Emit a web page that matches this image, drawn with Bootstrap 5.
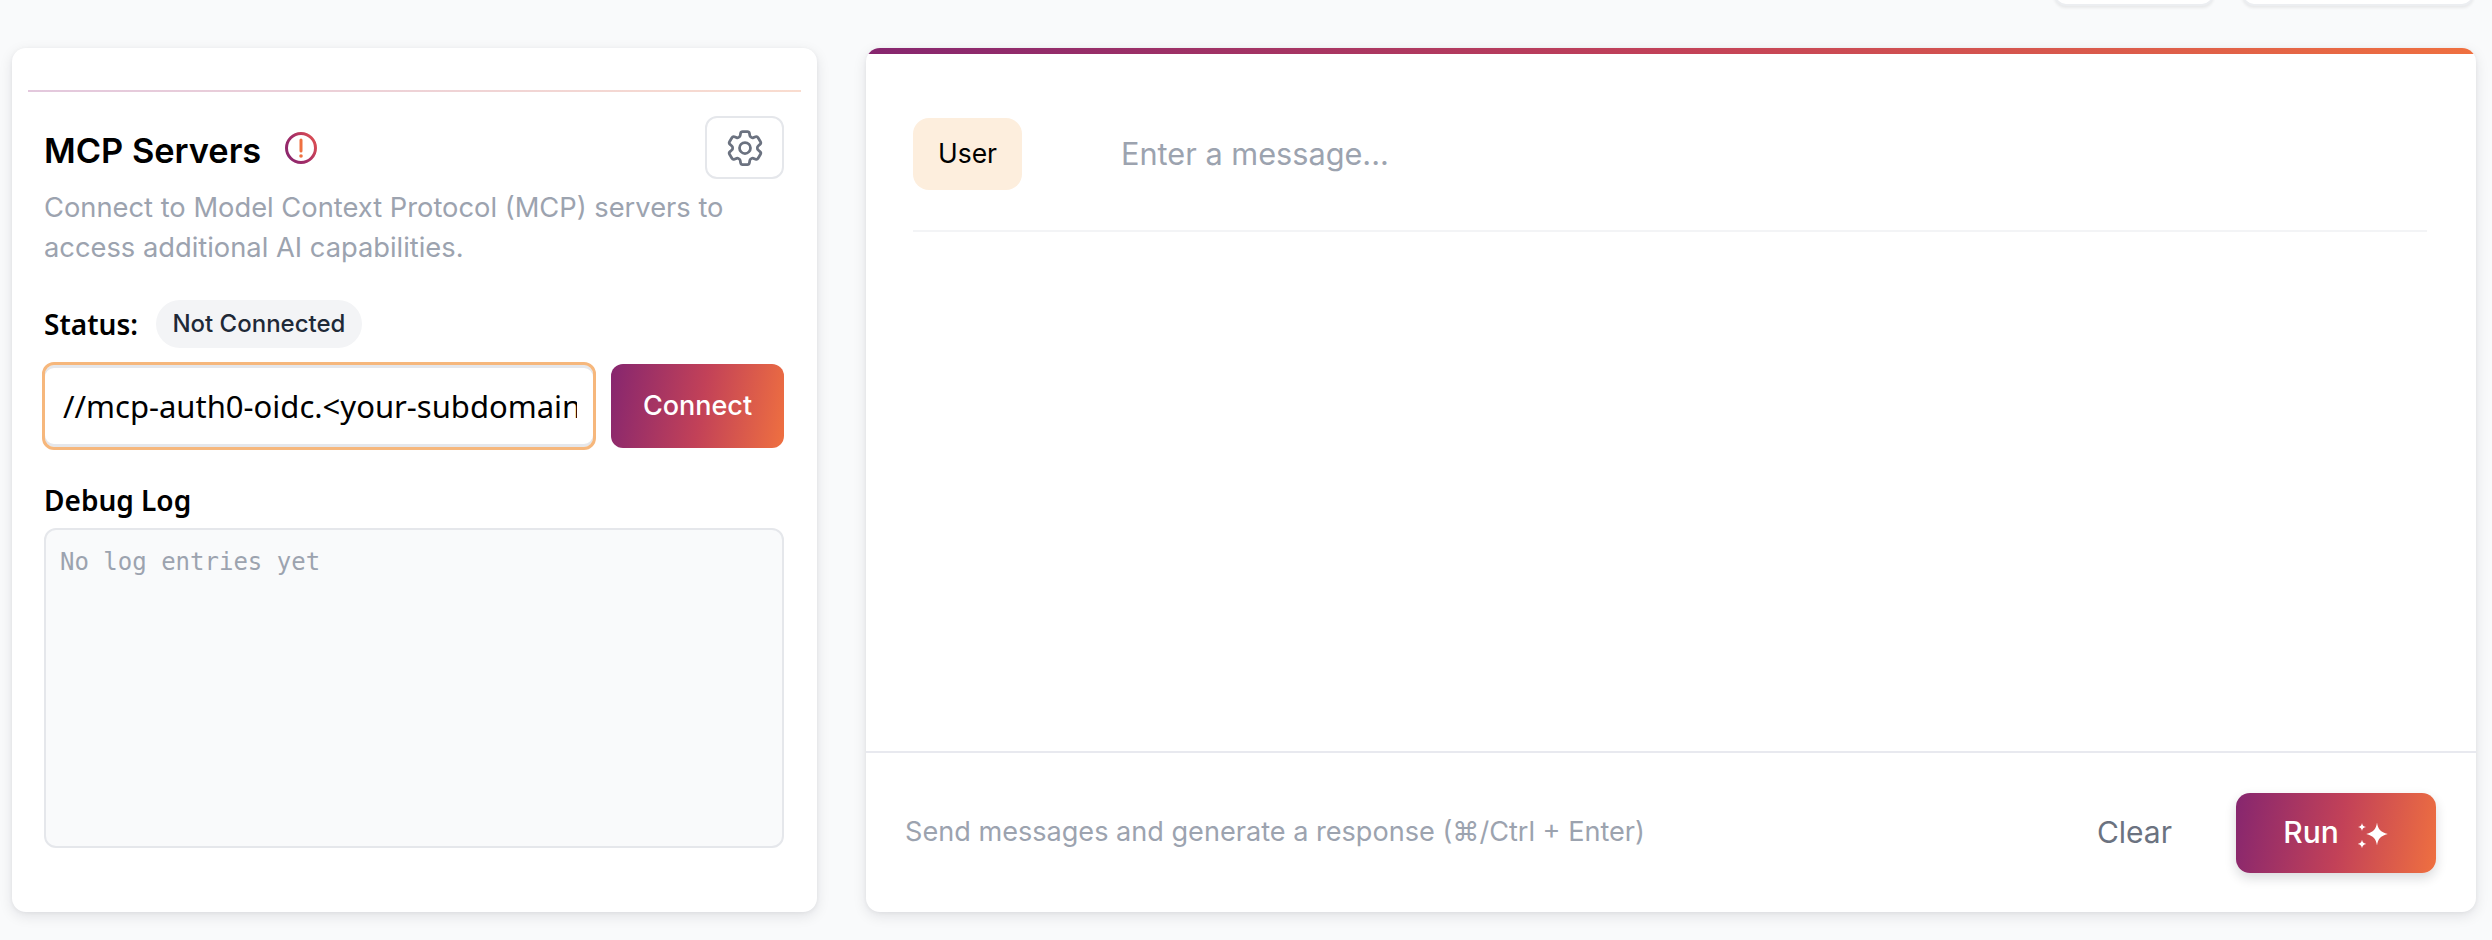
<!DOCTYPE html>
<html lang="en">
<head>
<meta charset="utf-8">
<title>MCP Playground</title>
<link href="https://cdn.jsdelivr.net/npm/bootstrap@5.3.0/dist/css/bootstrap.min.css" rel="stylesheet">
<style>
html, body { height: 940px; overflow: hidden; }
body { background: #f9fafb; font-family: Inter, "Liberation Sans", sans-serif; color: #000; }
.top-strip { height: 6px; padding-right: 18px; gap: 28px; }
.top-btn { height: 40px; flex: none; background: #fff; border: 2px solid #eceef1; border-radius: 12px; box-shadow: 0 2px 3px rgba(0,0,0,.07); }
.top-btn-a { width: 160px; }
.top-btn-b { width: 232px; }
.work-area { margin-top: 42px; height: 864px; padding: 0 16px 0 12px; gap: 49px; }
.panel { border: 0; border-radius: 14px; background: #fff; box-shadow: 0 4px 14px rgba(17,24,39,.1), 0 1px 4px rgba(17,24,39,.05); overflow: hidden; }
.panel-left { width: 805px; flex: none; padding: 42px 16px 0; }
.fade-rule { height: 2px; background: linear-gradient(90deg, #e3c8dd, #f9dccf); }
.panel-inner { padding: 0 17px 0 16px; }
.title-row { margin-top: 24px; height: 63px; }
.panel-title { font-size: 34.4px; line-height: 40px; font-weight: 600; margin: 0; padding-top: 15px; letter-spacing: 0; }
.alert-ico { width: 32px; height: 32px; margin-left: 24px; display: block; flex: none; }
.gear-btn { width: 79px; height: 63px; padding: 0; background: #fff; border: 2px solid #e5e7eb; border-radius: 12px; }
.gear-btn svg { width: 44px; height: 44px; stroke: #6b7280; fill: none; stroke-width: 1.5; stroke-linecap: round; stroke-linejoin: round; }
.desc-text { font-size: 27.3px; line-height: 40px; color: #9ca3af; margin: 9px 0 0; }
.status-row { margin-top: 32px; gap: 18px; }
.status-label, .log-label { font-family: "Noto Sans", sans-serif; font-size: 28px; line-height: 36px; font-weight: 600; }
.state-pill { height: 48px; width: 206px; background: #f3f4f6; border-radius: 24px; font-size: 24px; font-weight: 500; color: #1f2937; }
.connect-row { margin-top: 14px; margin-left: -2px; gap: 15px; }
.url-field.form-control { width: 554px; height: 88px; flex: none; padding: 0 16px 0 18px; border: 3px solid #f6b77c; border-radius: 12px; background: #fff; box-shadow: inset 0 3px 0 #e5e7eb, inset 0 -3px 0 #e5e7eb; font-family: "Noto Sans", "Open Sans", sans-serif; font-size: 31px; color: #000; }
.url-field.form-control:focus { border-color: #f6b77c; box-shadow: inset 0 3px 0 #e5e7eb, inset 0 -3px 0 #e5e7eb; }
.grad-btn { background: linear-gradient(100deg, #86266f 0%, #c24158 52%, #ef7040 100%); color: #fff; border: 0; border-radius: 12px; font-weight: 500; }
.grad-btn:hover, .grad-btn:active { color: #fff; }
.btn.connect-btn { width: 173px; height: 84px; font-size: 27px; padding: 0; }
.log-label { margin-top: 32px; }
.log-box { margin-top: 10px; height: 320px; padding: 14px 14px; background: #f9fafb; border: 2px solid #e5e7eb; border-radius: 12px; font-family: "DejaVu Sans Mono", monospace; font-size: 24px; line-height: 36px; color: #9ca3af; }
.panel-right { flex: 1 1 0; min-width: 0; }
.brand-bar { height: 6px; flex: none; background: linear-gradient(90deg, #86266f, #c24158 50%, #ef7040); }
.msg-area { padding: 64px 49px 0 47px; }
.msg-row { gap: 99px; padding-bottom: 40px; border-bottom: 2px solid #f3f4f6; }
.role-chip { width: 109px; height: 72px; flex: none; background: #fdeedd; border-radius: 16px; font-size: 26.5px; }
.msg-hint { font-size: 30.7px; color: #9ca3af; }
.panel-foot { height: 161px; flex: none; border-top: 2px solid #e8e9ef; padding: 0 40px 0 39px; }
.hint-text { font-size: 27.1px; color: #9ca3af; }
.clear-btn { font-size: 30px; color: #6b7280; margin-right: 64px; background: none; border: 0; padding: 0; }
.btn.run-btn { width: 200px; height: 80px; font-size: 30px; padding: 0; gap: 18px; box-shadow: 0 5px 12px rgba(17,24,39,.16); border-radius: 14px; }
.run-btn svg { width: 32px; height: 32px; fill: #fff; margin-top: 2px; }
</style>
</head>
<body>
<div class="top-strip d-flex justify-content-end align-items-end">
  <div class="top-btn top-btn-a"></div>
  <div class="top-btn top-btn-b"></div>
</div>
<main class="work-area d-flex align-items-stretch">
  <section class="card panel panel-left">
    <div class="fade-rule"></div>
    <div class="panel-inner">
      <div class="title-row d-flex justify-content-between align-items-start">
        <div class="d-flex align-items-start">
          <h2 class="panel-title">MCP Servers</h2>
          <svg class="alert-ico mt-3" viewBox="0 0 32 32" aria-hidden="true">
            <defs>
              <linearGradient id="ringGrad" x1="0" y1="1" x2="1" y2="0.4">
                <stop offset="0" stop-color="#86266f"/><stop offset=".55" stop-color="#a52d66"/><stop offset="1" stop-color="#d54a55"/>
              </linearGradient>
            </defs>
            <circle cx="16" cy="16" r="14.5" fill="none" stroke="url(#ringGrad)" stroke-width="3"/>
            <path d="M16 8v11" stroke="#ef7040" stroke-width="3" stroke-linecap="round"/>
            <circle cx="16" cy="24" r="1.8" fill="#ef7040"/>
          </svg>
        </div>
        <button class="btn gear-btn d-flex align-items-center justify-content-center" type="button" aria-label="Settings">
          <svg viewBox="0 0 24 24"><path d="M9.594 3.94c.09-.542.56-.94 1.11-.94h2.593c.55 0 1.02.398 1.11.94l.213 1.281c.063.374.313.686.645.87.074.04.147.083.22.127.325.196.72.257 1.075.124l1.217-.456a1.125 1.125 0 0 1 1.37.49l1.296 2.247a1.125 1.125 0 0 1-.26 1.431l-1.003.827c-.293.241-.438.613-.43.992a7.723 7.723 0 0 1 0 .255c-.008.378.137.75.43.991l1.004.827c.424.35.534.955.26 1.43l-1.298 2.247a1.125 1.125 0 0 1-1.369.491l-1.217-.456c-.355-.133-.75-.072-1.076.124a6.47 6.47 0 0 1-.22.128c-.331.183-.581.495-.644.869l-.213 1.281c-.09.543-.56.94-1.11.94h-2.594c-.55 0-1.019-.398-1.11-.94l-.213-1.281c-.062-.374-.312-.686-.644-.87a6.52 6.52 0 0 1-.22-.127c-.325-.196-.72-.257-1.076-.124l-1.217.456a1.125 1.125 0 0 1-1.369-.49l-1.297-2.247a1.125 1.125 0 0 1 .26-1.431l1.004-.827c.292-.24.437-.613.43-.991a6.932 6.932 0 0 1 0-.255c.007-.38-.138-.751-.43-.992l-1.004-.827a1.125 1.125 0 0 1-.26-1.43l1.297-2.247a1.125 1.125 0 0 1 1.37-.491l1.216.456c.356.133.751.072 1.076-.124.072-.044.146-.086.22-.128.332-.183.582-.495.644-.869l.214-1.28Z"/><path d="M15 12a3 3 0 1 1-6 0 3 3 0 0 1 6 0Z"/></svg>
        </button>
      </div>
      <p class="desc-text">Connect to Model Context Protocol (MCP) servers to access additional AI capabilities.</p>
      <div class="status-row d-flex align-items-center">
        <span class="status-label">Status:</span>
        <span class="state-pill d-inline-flex align-items-center justify-content-center">Not Connected</span>
      </div>
      <div class="connect-row d-flex align-items-center">
        <input class="form-control url-field" type="text" value="//mcp-auth0-oidc.&lt;your-subdomain&gt;.workers.dev/sse" aria-label="Server URL">
        <button class="btn grad-btn connect-btn" type="button">Connect</button>
      </div>
      <div class="log-label">Debug Log</div>
      <div class="log-box">No log entries yet</div>
    </div>
  </section>
  <section class="card panel panel-right d-flex flex-column">
    <div class="brand-bar"></div>
    <div class="msg-area flex-grow-1">
      <div class="msg-row d-flex align-items-center">
        <div class="role-chip d-flex align-items-center justify-content-center">User</div>
        <div class="msg-hint">Enter a message...</div>
      </div>
    </div>
    <div class="panel-foot d-flex align-items-center justify-content-between">
      <span class="hint-text">Send messages and generate a response (⌘/Ctrl + Enter)</span>
      <div class="d-flex align-items-center">
        <button class="clear-btn" type="button">Clear</button>
        <button class="btn grad-btn run-btn d-flex align-items-center justify-content-center" type="button">Run
          <svg viewBox="0 0 32 32" aria-hidden="true"><path d="M20 4.5c.9 6.6 3.4 9.6 10.8 11.5-7.4 1.9-9.9 4.9-10.8 11.5-.9-6.6-3.4-9.6-10.8-11.5 7.4-1.9 9.9-4.9 10.8-11.5Z"/><path d="M5 5c.4 2.4 1.3 3.4 4 4-2.7.6-3.600 1.6-4 4-.4-2.4-1.3-3.4-4-4 2.7-.6 3.6-1.6 4-4Z"/><path d="M5 21.5c.4 2.6 1.3 3.7 4.3 4.4-3 .7-3.9 1.8-4.3 4.4-.4-2.6-1.3-3.7-4.3-4.4 3-.7 3.9-1.8 4.3-4.4Z"/></svg>
        </button>
      </div>
    </div>
  </section>
</main>
<script src="https://cdn.jsdelivr.net/npm/bootstrap@5.3.0/dist/js/bootstrap.bundle.min.js"></script>
</body>
</html>
